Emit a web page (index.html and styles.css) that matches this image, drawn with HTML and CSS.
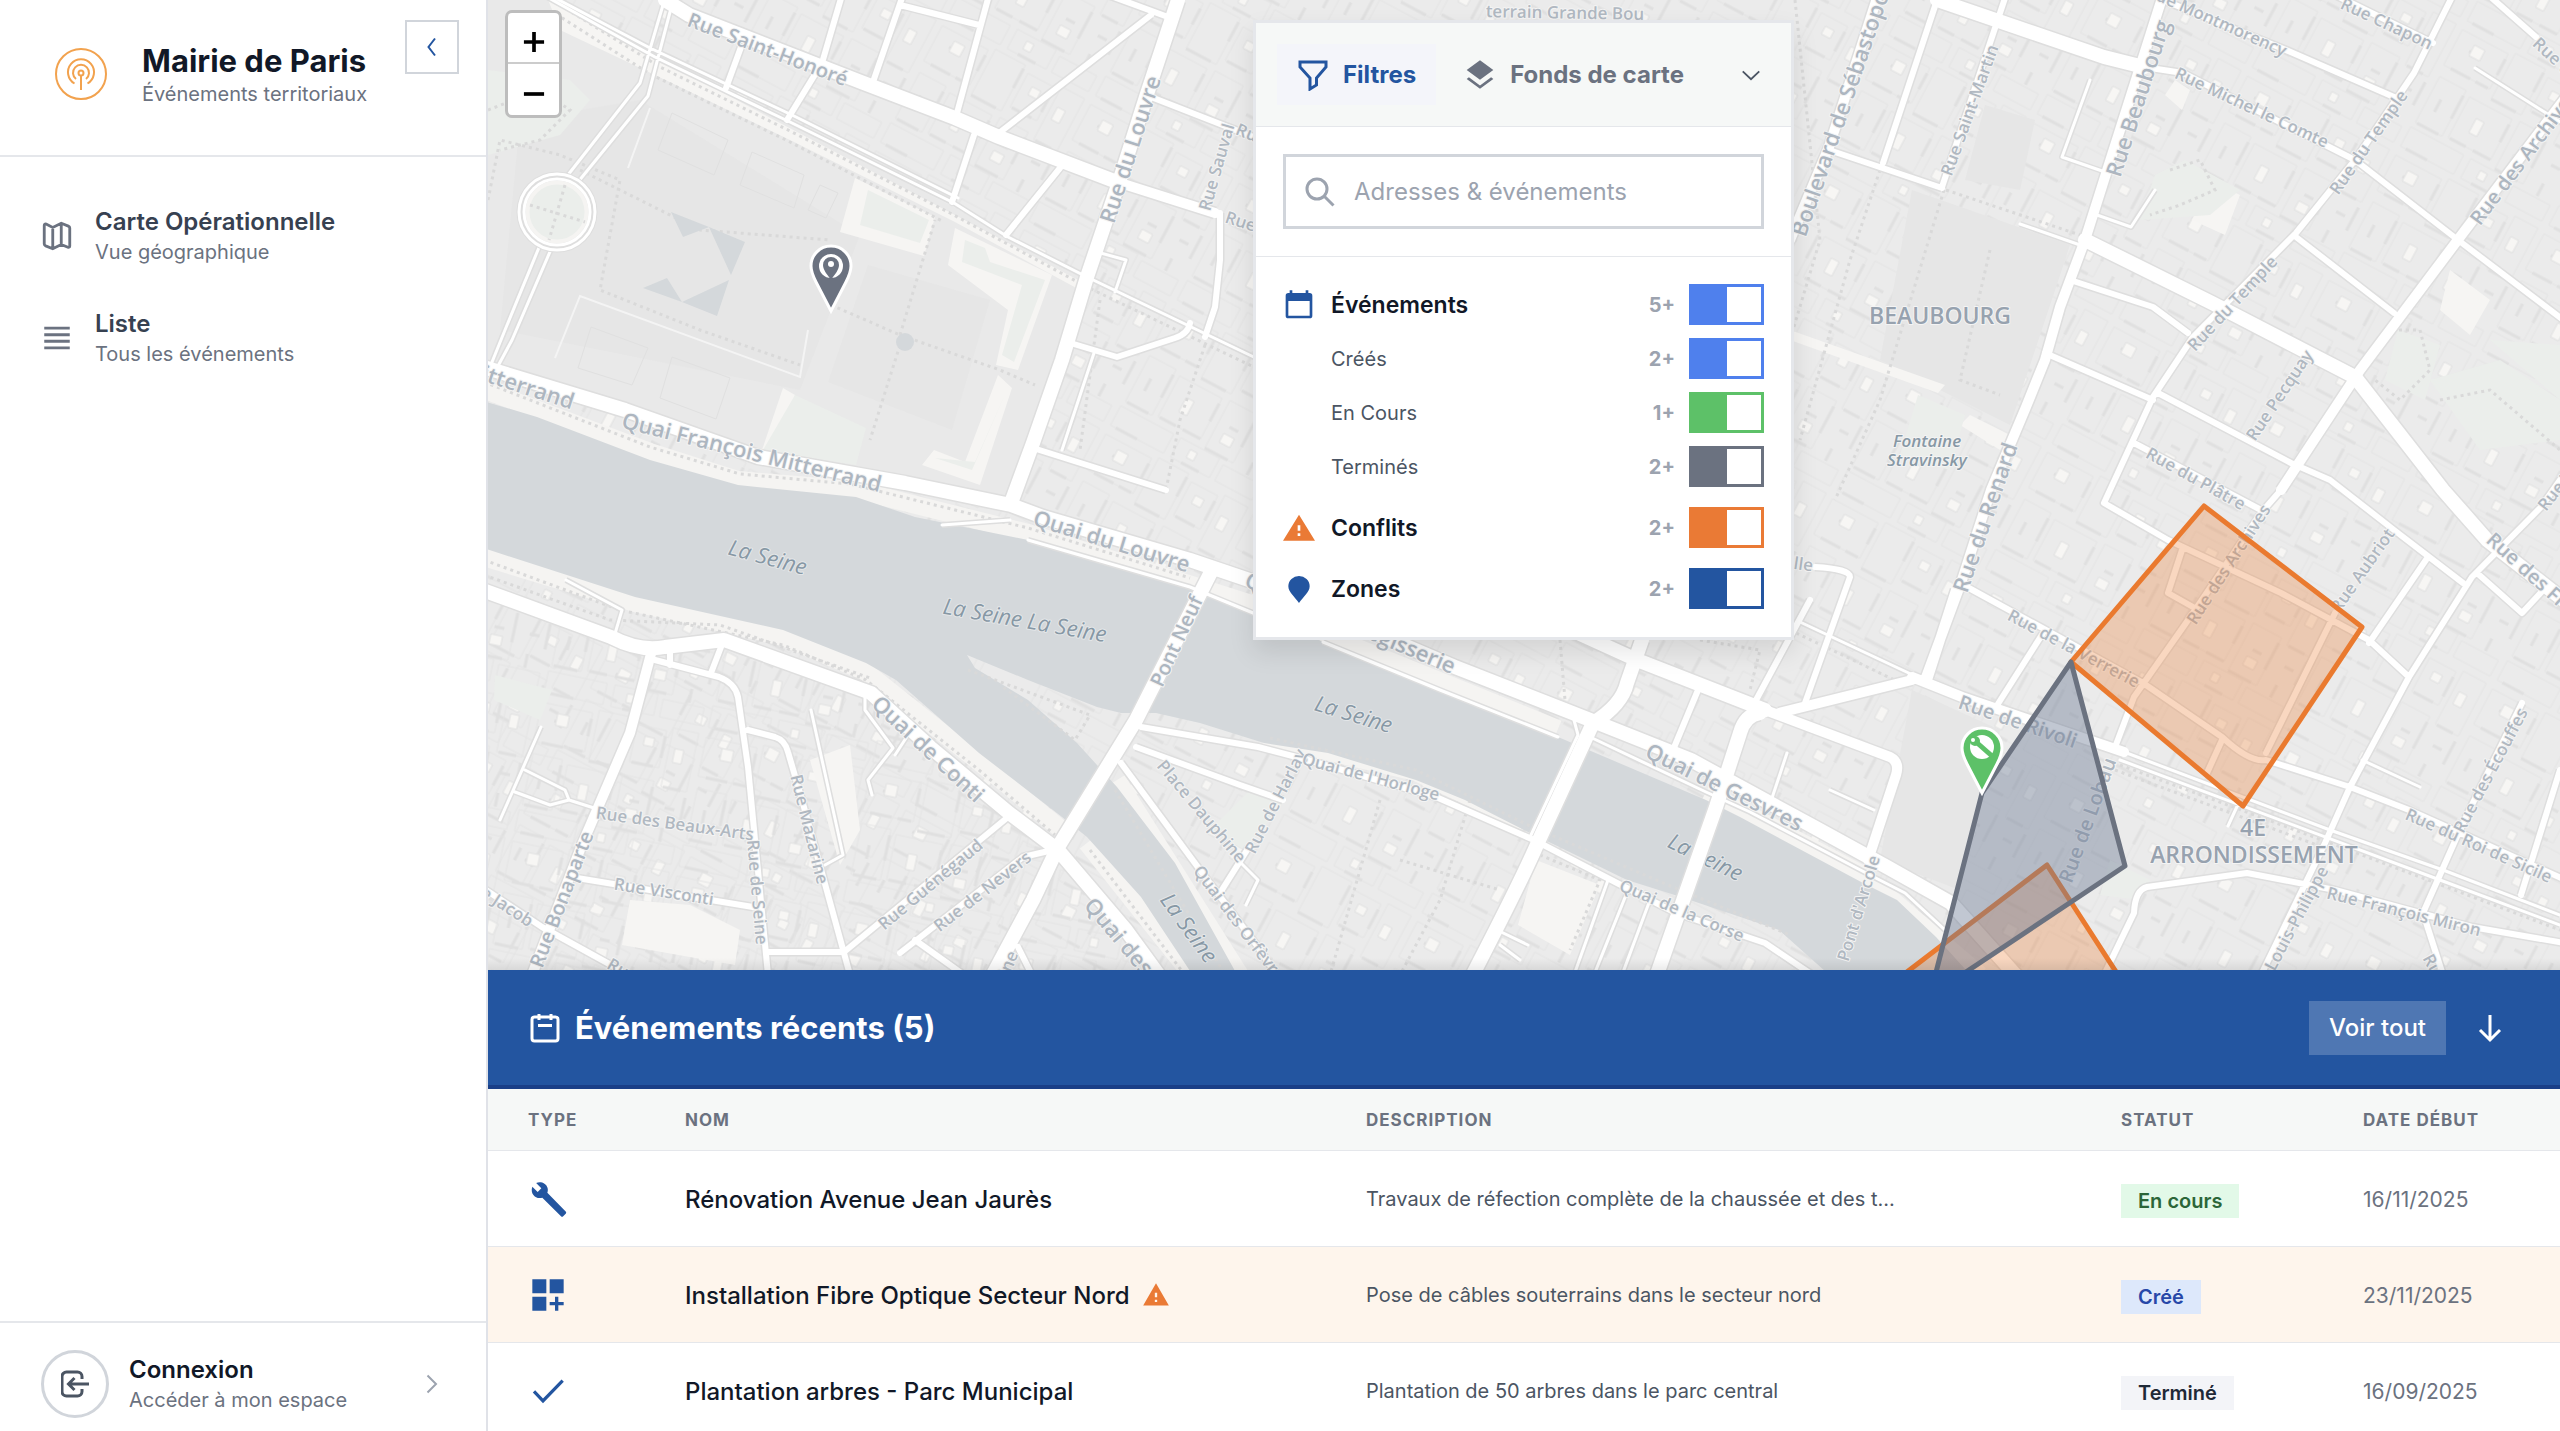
FILE: index.html
```html
<!DOCTYPE html>
<html lang="fr">
<head>
<meta charset="utf-8">
<meta name="viewport" content="width=device-width, initial-scale=1">
<title>Mairie de Paris</title>
<link rel="stylesheet" href="styles.css">
</head>
<body>
<div class="app">
  <aside class="sidebar">
    <header class="brand">
      <svg class="brand-logo" viewBox="0 0 52 52" aria-hidden="true"><circle cx="26" cy="26" r="25"/><circle cx="26" cy="25" r="2.5"/><path d="M26 28v14M21 31a8 8 0 1 1 10 0M19.500 35.500a13 13 0 1 1 13 0"/></svg>
      <div class="brand-text">
        <h1 class="brand-title">Mairie de Paris</h1>
        <p class="sub">Événements territoriaux</p>
      </div>
      <button class="collapse" type="button" aria-label="Réduire le menu"><svg viewBox="0 0 24 24" class="ic-24"><path d="M15 3.500 8.500 12l6.500 8.500"/></svg></button>
    </header>
    <nav class="nav">
      <a class="nav-item" href="#carte">
        <svg class="nav-icon" viewBox="0 0 24 24"><path d="M3 4.500c0-.8.600-1.200 1.300-.9L9 6l6-3 5 2c.7.300 1 .6 1 1.300V19c0 .8-.600 1.200-1.300.9L15 18l-6 3-5-2c-.7-.300-1-.6-1-1.300zM9 6v15M15 3v15"/></svg>
        <span class="nav-text"><strong class="item-title">Carte Opérationnelle</strong><span class="sub">Vue géographique</span></span>
      </a>
      <a class="nav-item" href="#liste">
        <svg class="nav-icon" viewBox="0 0 24 24"><path d="M3 5h18M3 9.700h18M3 14.300h18M3 19h18"/></svg>
        <span class="nav-text"><strong class="item-title">Liste</strong><span class="sub">Tous les événements</span></span>
      </a>
    </nav>
    <a class="login" href="#connexion">
      <span class="login-circle"><svg viewBox="0 0 28 28" class="ic-28"><path d="M21 9V6.500A4.500 4.500 0 0 0 16.500 2H5.500A4.500 4.500 0 0 0 1 6.500v15A4.500 4.500 0 0 0 5.500 26h11a4.500 4.500 0 0 0 4.500-4.500V19M28 14H8M13.500 8 7.500 14l6 6"/></svg></span>
      <span class="login-text"><strong class="item-title dark">Connexion</strong><span class="sub">Accéder à mon espace</span></span>
      <svg viewBox="0 0 24 24" class="ic-24 login-chevron"><path d="M7.500 3.500 16 12l-8.500 8.500"/></svg>
    </a>
  </aside>

  <main class="main">
    <section class="map" id="carte" aria-label="Carte">
      <svg class="map-canvas" viewBox="488 0 2072 970" preserveAspectRatio="xMidYMid slice">
        <defs>
          <pattern id="blocks" width="168" height="142" patternUnits="userSpaceOnUse" patternTransform="rotate(28)">
            <path class="b-lot" d="M4 6h52v40H4zM62 2h34v52H62zM102 8h30v38h-30zM138 4h26v60h-26zM6 58h30v52H6zM42 62h48v46H42zM98 60h32v54H98zM4 116h60v22H4zM72 116h44v22H72zM122 120h42v18h-42z"/>
            <path class="b-shade" d="M12 46h22M40 46h14M62 54h28M104 46h22M8 110h24M44 108h18M70 108h20M98 114h26M56 12v18M96 6v22M132 14v22M36 64v26M90 68v20M130 66v30M20 22h12M110 84h10M18 78v14M140 64h18M164 70v26M146 84h10M10 138h24M84 138h20M148 104v14"/>
            <path class="b-court" d="M22 14h12v12H22zM112 18h10v9h-10zM58 78h9v16h-9zM108 92h12v10h-12zM144 24h9v14h-9zM86 122h8v9h-8z"/>
          </pattern>
          <pattern id="blocks-left" href="#blocks" patternTransform="rotate(12)"/>
          <path id="road-lg" d="M665 0 689 15 861 82 955 118 999 137 1117 182M1178 0 1146 97 1119 182 1087 277 1062 360 1033 443 1011 503M480 366 625 410 758 457 905 483 1011 505 1043 517 1190 560 1258 583 1455 667 1598 723 1691 760 1814 827 1887 867 1951 903 2020 980M480 589 611 637Q640 652 665 647L724 640 871 693 930 747 1009 813 1058 850 1126 930 1166 985M1212 570 1136 720 1058 847 1033 900 990 980M1642 640 1627 683Q1622 705 1593 723L1539 840Q1522 880 1470 980M1760 713Q1745 715 1740 733L1716 807 1655 980M1937 0 2104 57 2144 67M2085 240 2212 303 2355 377 2443 490 2487 540 2570 605M1560 625 1637 660 1765 710"/>
          <path id="road-md" d="M2163-5 2104 180 2085 240 2060 307 2045 360 2026 407 1991 490 1962 580 1925 680M1878-5 1829 147 1790 240M2566 97 2463 233 2360 370 2281 490M1779 713 1912 680M1912 677 1962 697 2124 752M1765 710 1890 757Q1900 762 1896 775L1868 860M652 650 630 733 581 847 530 980M1117 182 1215 213M1956 590 1927 680"/>
          <path id="road-sm" d="M842-5 822 63 787 120M903-5 873 82M989-5 957 113M900 5 979 25M974 135 952 202M741 47 726 88M1100-8 1168 17M1151 15 999 133M1060 168 1006 235M1151 97 1256 138M1220 213V260L1215 307 1205 337M1067 342 1117 357 1175 338Q1188 334 1190 323M1033 448 1166 490M655 660 719 677Q735 683 738 697L748 767 768 975M748 730 775 737Q785 740 788 752L802 800 850 975M1008 817 844 952 768 952M1053 850 1023 857 900 953M915 940 964 975M1018 947 1032 975M571 877 753 907M480 886 542 927 620 970M721 647 711 673M670 652V665M1141 727 1258 747 1308 760 1436 797 1534 840 1617 883 1676 913 1765 943 1820 980M1136 747 1240 785 1283 800M1121 763 1200 870 1258 947 1280 980M1249 847 1220 893M1937 0 1883 163M2006-5 1942 187M1829 150 1942 188M2144 67 2183 73 2355 160 2458 240 2570 325M2453-5 2414 73 2355 160 2296 233 2193 337 2153 397 2104 503 2168 540 2281 593 2369 640 2409 677M2163 0 2286 50 2394 97M2335-5 2433 43M2485-8 2536 37M2296 237 2394 313M2070 280 2153 307 2188 333M2045 353 2153 400M2158 393 2291 463 2330 480 2394 530 2463 583M2134 443 2261 510M2281 490 2261 513 2193 613 2134 697 2114 750M1967 587 2143 683 2222 737Q2250 763 2266 760L2350 787 2409 810 2570 882M2560 480 2541 507 2472 577 2409 677 2350 787 2325 843 2261 975M2428 557 2369 643M2335 613 2266 753M2183 547 2168 593 2193 607M2222 740 2207 773M2477 573 2522 613 2546 587M2522 703 2463 823 2423 913 2443 975M2560 770 2521 895M2104 975 2134 913Q2135 890 2147 887L2247 873 2335 890 2472 927 2570 944M2045 630 1996 707M1815 567Q1850 569 1850 577L1805 703M1810 600 1755 702M1698 690 1673 750"/>
          <path id="road-xs" d="M547-3 655 57 792 123 954 203 1008 237 1087 277 1260 360M540-10 650 48 794 116 958 198M663 5 640 83 564 180M670 12 648 96 578 182M540 245 505 330 488 372M552 247 512 340 498 366M1097 252 1126 260 1115 292M1094 353 1062 450M566 580 622 610 614 637M1028 540 1190 587 1258 615M942 525 1010 520M1323 642 1440 690 1558 737M1574 720 1578 735 1531 835M811 710 843 855 825 865M865 695V710L893 748 868 780 872 795M908 735 895 755M541 727 500 820M525 770 565 790 569 800 594 808M515 792 550 805 569 800M1497 930 1528 945M1500 945 1520 960M1608 880 1574 975M1628 890 1594 975M1650 900 1622 975M1787 753 1772 798M1830 790 1874 810M2090 80 2062 157 2105 172M2097 215 2131 227 2155 190M2020 224 2080 245M1800 622 1915 676M2124 752 2330 830 2443 870 2560 915M2120 760 2440 880 2560 925M2475 68 2565 125M2240 800 2228 826M2362 760 2420 787M1590 737 1706 792 1750 812 1868 874 1905 893 1945 930M1240 862 1258 880 1246 905"/>
          <path id="river" d="M480 400 537 417 650 460 738 485 856 497 915 517 1028 540 1077 553 1190 587 1258 612 1323 642 1558 737 1706 800 1740 817 1863 883 1897 900 1936 937 1975 980H1835L1779 930 1681 897 1627 880 1551 843 1524 830 1465 800 1416 780 1328 753 1264 743 1200 723 1156 713 1121 713 1097 707 1028 680 967 655 975 668 1028 700 1077 743 1117 787 1175 863 1240 980H1196L1141 897 1087 837 1062 817 979 753 896 680 866 663 783 630 635 597 480 547Z"/>
        </defs>
        <path class="land" d="M480-5h2090v990H480z"/>
        <path fill="url(#blocks)" d="M480-5h2090v990H480z"/>
        <path fill="url(#blocks-left)" d="M480 590 620 640 724 640 871 693 1058 850 1166 980H480z"/>
        <path class="plain" d="M480-5H547L1087 277 1011 500 758 452 480 362z"/>
        <path class="plain-2" d="M520 120 640 100 860 235 800 390 500 330zM868 265 990 300 952 430 828 382zM1912 190 2070 245 2010 425 1880 360zM1985 105 2035 120 2020 190 1965 180zM1912 690 2000 730 1960 890 1880 860z"/>
        <path class="outline" d="M672 113 728 140 714 175 658 150zM752 152 804 175 794 208 740 185zM820 185 838 193 826 218 808 210zM591 327 648 348 632 385 578 368zM672 357 730 378 716 419 660 398z"/>
        <path class="edge" d="M555 358 580 296 800 377 808 330M650 108 628 168"/>
        <path class="sand" d="M547-3 560 30 655 75 790 140 955 222 1080 290 1082 282 655 57zM855 178 935 217 924 256 840 232zM955 228 1052 275 1018 370 996 365 1008 310 948 265zM998 375 1012 388 980 485 922 465 934 450 965 462zM783 388 795 395 778 440 762 450zM2210 180 2240 195 2225 235 2192 220zM2450 270 2490 300 2470 335 2440 310zM1536 860 1600 885 1570 955 1518 925zM2175 80 2190 90 2182 110 2165 95zM1970 415 2010 435 2000 450 1960 425zM1790 330 1945 385 1938 393 1790 340zM630 900 690 905 740 930 735 965 622 945zM810 760 850 745 860 830 840 865z"/>
        <path class="park" d="M868 190 929 220 920 243 860 225zM965 240 985 248 990 262 1045 280 1014 362 1002 355 1022 285 962 262zM1006 392 972 470 935 458 975 462zM795 395 866 428 856 465 763 450zM488 70 570 80 590 100 560 135 488 155zM495 675 552 690 540 720 494 700zM2155 175 2185 160 2240 190 2210 215 2140 220zM2398 330 2440 345 2425 400 2385 380zM2430 380 2500 360 2560 400V440L2480 450zM1918 395 1965 415 1950 470 1900 455zM1250 790 1283 803 1245 850 1210 830zM2490 340 2560 345V400zM2110 860 2150 880 2140 900 2100 895z"/>
        <path class="bank" d="M480 388 650 452 738 480 856 490 1028 533 1258 606M480 556 635 603 783 637 866 672 979 762 1062 830M1087 843 1196 980M1117 780 1243 980M1264 737 1416 772 1524 822M1323 634 1558 729M1706 792 1863 875 1980 975"/>
        <use href="#river" class="water"/>
        <path class="dots" d="M560 5 660 67 792 132 950 213 1087 287 1260 370M556 14 650 74 790 142 944 222M484 382 650 447 740 474 850 484 1028 528 1190 578M484 560 620 610 783 645 866 680 979 770 1055 835M484 575 610 620 720 625 870 678M1090 850 1185 975M1115 790 1225 975M1270 738 1416 770 1530 826 1680 890 1790 935M968 670 1090 715 1075 740 1000 685M2120 765 2330 843 2560 930M2115 770 2325 848M1795 0 1820 240 1790 340M1790 630 1905 685M1944 190 1880 400 1835 500M1880 170 1850 260 1800 440M1946 190 2080 235M1990 250 1960 380 2000 395M2170 170 2200 160 2215 190 2180 205 2150 215M2440 400 2490 390 2560 450M2385 330 2420 330 2430 370 2400 400 2375 380M831 305 900 335 1000 370 1035 385M900 335 935 220M900 345 870 440M580 170 700 230 830 240M488 110 540 90 570 110 540 140 500 150M488 200 500 140 560 155 620 180 600 290 700 330 800 365M530 212H585M557 185V240M1540 855 1600 880 1570 950M1470 800 1440 900 1400 975M1380 800 1330 975M1400 860 1500 890M1100 300 1080 450M1205 345 1180 420 1166 490M1560 640 1565 700M1700 640 1760 650 1750 690"/>
        <path class="glass" d="M671 212 683 237 709 227zM709 227 745 242 731 275zM643 288 667 278 682 302zM682 302 729 280 717 316z"/>
        <circle class="glass" cx="905" cy="342" r="9"/>
        <g class="labels water-label">
          <text transform="translate(1706 856) rotate(26)">La Seine</text>
        </g>
        <g class="casing"><use href="#road-xs" class="xs"/><use href="#road-sm" class="sm"/><use href="#road-md" class="md"/><use href="#road-lg" class="lg"/></g>
        <g class="fill"><use href="#road-xs" class="xs"/><use href="#road-sm" class="sm"/><use href="#road-md" class="md"/><use href="#road-lg" class="lg"/></g>
        <circle class="ring-case" cx="557" cy="212" r="36"/><circle class="ring" cx="557" cy="212" r="38"/><circle class="ring" cx="557" cy="212" r="33"/><circle class="ring-in" cx="557" cy="212" r="29"/>
        <path class="dots" d="M530 205 585 222M565 185 549 240"/>

        <g class="labels water-label">
          <text transform="translate(768 556) rotate(15)">La Seine</text>
          <text transform="translate(1025 619) rotate(10)">La Seine La Seine</text>
          <text transform="translate(1354 713) rotate(17)">La Seine</text>
          <text transform="translate(1190 927) rotate(54)">La Seine</text>
        </g>
        <g class="labels major">
          <text transform="translate(1129 149) rotate(-72)">Rue du Louvre</text>
          <text transform="translate(574 401) rotate(18)" class="end">Quai François Mitterrand</text>
          <text transform="translate(752 451) rotate(14)">Quai François Mitterrand</text>
          <text transform="translate(1112 540) rotate(17)">Quai du Louvre</text>
          <text transform="translate(929 748) rotate(43)">Quai de Conti</text>
          <text transform="translate(1090 900) rotate(50)" class="start">Quai des Grands Augustins</text>
          <text transform="translate(1455 666) rotate(23)" class="end">Quai de la Mégisserie</text>
          <text transform="translate(1725 786) rotate(26)">Quai de Gesvres</text>
          <text transform="translate(1797 235) rotate(-71)" class="start">Boulevard de Sébastopol</text>
          <text transform="translate(2137 98) rotate(-72)">Rue Beaubourg</text>
          <text transform="translate(1984 517) rotate(-71)">Rue du Renard</text>
        </g>
        <g class="labels medium">
          <text transform="translate(768 49) rotate(21)">Rue Saint-Honoré</text>
          <text transform="translate(2018 721) rotate(19)">Rue de Rivoli</text>
          <text transform="translate(2087 820) rotate(-70)">Rue de Lobau</text>
          <text transform="translate(561 899) rotate(-69)">Rue Bonaparte</text>
          <text transform="translate(1176 641) rotate(-65)">Pont Neuf</text>
          <text transform="translate(2474 222) rotate(-53)" class="start">Rue des Archives</text>
          <text transform="translate(2490 536) rotate(42)" class="start">Rue des Francs Bourgeois</text>
        </g>
        <g class="labels minor">
          <text transform="translate(1216 167) rotate(-74)">Rue Sauval</text>
          <text transform="translate(1237 128) rotate(22)" class="start">Rue Berger</text>
          <text transform="translate(1226 216) rotate(18)" class="start">Rue des Halles</text>
          <text transform="translate(1565 12) rotate(1)">terrain Grande Bou</text>
          <text transform="translate(1202 811) rotate(50)">Place Dauphine</text>
          <text transform="translate(1242 926) rotate(53)">Quai des Orfèvres</text>
          <text transform="translate(1275 801) rotate(-63)">Rue de Harlay</text>
          <text transform="translate(1371 776) rotate(15)">Quai de l'Horloge</text>
          <text transform="translate(1682 910) rotate(23)">Quai de la Corse</text>
          <text transform="translate(1858 908) rotate(-73)">Pont d'Arcole</text>
          <text transform="translate(675 823) rotate(8)">Rue des Beaux-Arts</text>
          <text transform="translate(664 891) rotate(9)">Rue Visconti</text>
          <text transform="translate(758 892) rotate(85)">Rue de Seine</text>
          <text transform="translate(810 829) rotate(76)">Rue Mazarine</text>
          <text transform="translate(930 884) rotate(-40)">Rue Guénégaud</text>
          <text transform="translate(982 891) rotate(-38)">Rue de Nevers</text>
          <text transform="translate(532 922) rotate(33)" class="end">Rue Jacob</text>
          <text transform="translate(609 962) rotate(30)" class="start">Rue Jacob</text>
          <text transform="translate(1003 975) rotate(-68)" class="start">ine</text>
          <text transform="translate(1969 110) rotate(-70)">Rue Saint-Martin</text>
          <text transform="translate(2286 51) rotate(24)" class="end">Rue de Montmorency</text>
          <text transform="translate(2387 23) rotate(25)">Rue Chapon</text>
          <text transform="translate(2252 107) rotate(25)">Rue Michel le Comte</text>
          <text transform="translate(2368 142) rotate(-55)">Rue du Temple</text>
          <text transform="translate(2232 303) rotate(-47)">Rue du Temple</text>
          <text transform="translate(2279 395) rotate(-56)">Rue Pecquay</text>
          <text transform="translate(2196 478) rotate(29)">Rue du Plâtre</text>
          <text transform="translate(2536 40) rotate(43)" class="start">Rue de Bretagne</text>
          <text transform="translate(2074 648) rotate(28)">Rue de la Verrerie</text>
          <text transform="translate(2228 564) rotate(-57)">Rue des Archives</text>
          <text transform="translate(2362 570) rotate(-55)">Rue Aubriot</text>
          <text transform="translate(2490 770) rotate(-62)">Rue des Écouffes</text>
          <text transform="translate(2479 845) rotate(24)">Rue du Roi de Sicile</text>
          <text transform="translate(2404 911) rotate(14)">Rue François Miron</text>
          <text transform="translate(2323 867) rotate(-62)" class="end">Rue du Pont Louis-Philippe</text>
          <text transform="translate(2541 508) rotate(-52)" class="start">Rue Vieille</text>
          <text transform="translate(2428 955) rotate(62)" class="start">Rue</text>
          <text transform="translate(1813 565) rotate(8)" class="end">Rue de la Coutellerille</text>
          <g class="poi"><text x="1927" y="440">Fontaine</text><text x="1927" y="459">Stravinsky</text></g>
        </g>
        <g class="labels district">
          <text x="1940" y="315">BEAUBOURG</text>
          <text x="2253" y="827">4E</text>
          <text x="2254" y="854">ARRONDISSEMENT</text>
        </g>

        <path class="zone conflict" d="M2204 506 2362 627 2243 806 2071 662z"/>
        <path class="zone conflict" d="M2047 865 2120 978H1899z"/>
        <path class="zone done" d="M2071 662 2125 866 1948 984H1933L1982 793z"/>
        <g class="pin pin-done" transform="translate(831 311)">
          <path d="M0 0-15-29C-18-35-20-39-20-45a20 20 0 0 1 40 0C20-39 18-35 15-29z"/>
          <circle class="pin-dot" cy="-45" r="12"/>
          <path class="pin-glyph" d="M0-31c-4-6-8-10-8-15a8 8 0 0 1 16 0c0 5-4 9-8 15z"/>
          <circle class="pin-dot" cy="-47" r="3"/>
        </g>
        <g class="pin pin-active" transform="translate(1982 793)">
          <path d="M0 0-15-29C-18-35-20-39-20-45a20 20 0 0 1 40 0C20-39 18-35 15-29z"/>
          <circle class="pin-dot" cy="-46" r="12"/><path class="pin-tool" d="M-7-52 10-37"/><circle class="pin-glyph" cx="-7" cy="-52" r="5"/><circle class="pin-dot" cx="-9" cy="-53" r="2"/>
        </g>
      </svg>

      <div class="zoom">
        <button type="button" class="zoom-btn" aria-label="Zoom avant"><svg viewBox="0 0 24 24"><path d="M12 1v22M1 12h22"/></svg></button>
        <button type="button" class="zoom-btn" aria-label="Zoom arrière"><svg viewBox="0 0 24 24"><path d="M1 12h22"/></svg></button>
      </div>

      <div class="filters">
        <div class="tabs">
          <button type="button" class="tab active"><svg viewBox="0 0 32 32" class="ic-32"><path d="M3 3h26v5L19.500 19v7L13 30V19L3 8z"/></svg>Filtres</button>
          <button type="button" class="tab"><svg viewBox="0 0 24 24" class="ic-32 solid"><path d="M12 1 2 8.300l10 7.300 10-7.300zM3.700 13.700 2 15l10 7.300L22 15l-1.700-1.300L12 19.900z"/></svg>Fonds de carte</button>
          <button type="button" class="tab-toggle" aria-label="Replier"><svg viewBox="0 0 24 24" class="ic-24"><path d="m3 8 9 8.500L21 8"/></svg></button>
        </div>
        <div class="search-wrap">
          <label class="search"><svg viewBox="0 0 32 32" class="ic-32"><circle cx="13" cy="13" r="10"/><path d="m20.500 20.500 9 9"/></svg><input type="search" placeholder="Adresses &amp; événements" aria-label="Adresses et événements"></label>
        </div>
        <div class="layers">
          <label class="layer"><svg viewBox="0 0 24 24" class="ic-32 blue"><path d="M20 3h-1V1h-2v2H7V1H5v2H4a2 2 0 0 0-2 2v15a2 2 0 0 0 2 2h16a2 2 0 0 0 2-2V5a2 2 0 0 0-2-2zm0 17H4V9h16z"/></svg><span class="layer-name">Événements</span><span class="count">5+</span><input type="checkbox" class="toggle t-created" checked></label>
          <label class="layer child"><span class="layer-name">Créés</span><span class="count">2+</span><input type="checkbox" class="toggle t-created" checked></label>
          <label class="layer child"><span class="layer-name">En Cours</span><span class="count">1+</span><input type="checkbox" class="toggle t-active" checked></label>
          <label class="layer child"><span class="layer-name">Terminés</span><span class="count">2+</span><input type="checkbox" class="toggle t-done" checked></label>
          <label class="layer group"><svg viewBox="0 0 24 24" class="ic-32 orange"><path fill-rule="evenodd" d="M0 21.500h24L12 2zm13-3.500h-2v-2h2zm0-4h-2v-4h2z"/></svg><span class="layer-name">Conflits</span><span class="count">2+</span><input type="checkbox" class="toggle t-conflict" checked></label>
          <label class="layer group"><svg viewBox="0 0 24 24" class="ic-32 blue"><path d="M12 22.500C9 18 4 14.500 4 10a8 7.800 0 0 1 16 0C20 14.500 15 18 12 22.500z"/></svg><span class="layer-name">Zones</span><span class="count">2+</span><input type="checkbox" class="toggle t-zone" checked></label>
        </div>
      </div>
    </section>

    <section class="events" id="liste">
      <header class="events-head">
        <svg viewBox="0 0 32 32" class="ic-32"><rect x="3" y="5" width="26" height="24" rx="2.500"/><path d="M10 2v6M22 2v6M9 13.500h14"/></svg>
        <h2 class="events-title">Événements récents (5)</h2>
        <button type="button" class="see-all">Voir tout</button>
        <button type="button" class="hide" aria-label="Masquer"><svg viewBox="0 0 32 32" class="ic-32"><path d="M16 3v25M6 18l10 10 10-10"/></svg></button>
      </header>
      <table class="table">
        <thead><tr><th class="c-type">Type</th><th class="c-name">Nom</th><th>Description</th><th class="c-status">Statut</th><th class="c-date">Date début</th></tr></thead>
        <tbody>
          <tr><td><svg viewBox="0 0 24 24" class="ic-40 blue"><path d="M2.600 4.600 5.800 7.800 8 5.600 4.900 2.400C7.600 1.300 10.800 2.500 11.700 5.200c.3 1 .3 2-.1 3L22.600 19.500c.4.4.4.9 0 1.300l-1.500 1.500c-.4.4-.9.4-1.300 0L8.600 11.200c-3.600 1.300-7.600-2.200-6-6.600z"/></svg></td><td class="name">Rénovation Avenue Jean Jaurès</td><td class="desc">Travaux de réfection complète de la chaussée et des t...</td><td><span class="badge b-active">En cours</span></td><td class="date">16/11/2025</td></tr>
          <tr class="warn"><td><svg viewBox="0 0 24 24" class="ic-40 blue"><path d="M2.600 2.600h8.400v8.400H2.600zM13 2.600h8.400v8.400H13zM2.600 13h8.400v8.400H2.600zM18.200 13h-2v3.200H13v2h3.200v3.200h2v-3.200h3.200v-2h-3.200z"/></svg></td><td class="name">Installation Fibre Optique Secteur Nord<svg viewBox="0 0 24 24" class="ic-28 orange name-alert"><path fill-rule="evenodd" d="M1 21h22L12 2zm12-3h-2v-2h2zm0-4h-2v-4h2z"/></svg></td><td class="desc">Pose de câbles souterrains dans le secteur nord</td><td><span class="badge b-created">Créé</span></td><td class="date">23/11/2025</td></tr>
          <tr><td><svg viewBox="0 0 24 24" class="ic-40 blue"><path d="M9 16.500 4.300 11.500l-1.400 1.400L9 19.300 21.500 6.500l-1.400-1.400z"/></svg></td><td class="name">Plantation arbres - Parc Municipal</td><td class="desc">Plantation de 50 arbres dans le parc central</td><td><span class="badge b-done">Terminé</span></td><td class="date">16/09/2025</td></tr>
        </tbody>
      </table>
    </section>
  </main>
</div>
</body>
</html>
```
FILE: styles.css
```css
* { box-sizing: border-box; }
body { margin: 0; font-family: Inter, "Liberation Sans", sans-serif; color: #111827; background: #fff; }
h1, h2, p { margin: 0; }
a { color: inherit; text-decoration: none; }
button { font: inherit; color: inherit; border: 0; background: none; padding: 0; cursor: pointer; }
svg { display: block; flex: none; fill: none; stroke: currentColor; stroke-width: 2; }
.ic-24 { width: 24px; height: 24px; }
.ic-28 { width: 28px; height: 28px; }
.ic-32 { width: 32px; height: 32px; }
.ic-40 { width: 40px; height: 40px; }
.solid, .blue, .orange { fill: currentColor; stroke: none; }
.blue { color: #2355a0; }
.orange { color: #ea7a35; }

.app { display: grid; grid-template-columns: 488px minmax(0, 1fr); height: 100vh; overflow: hidden; }

/* Sidebar */
.sidebar { display: flex; flex-direction: column; border-right: 2px solid #e0e2e8; }
.brand { display: flex; align-items: flex-start; height: 157px; padding: 20px 27px 0 55px; border-bottom: 2px solid #e5e7eb; }
.brand-logo { width: 52px; height: 52px; margin-top: 28px; color: #f2a24e; }
.brand-text { flex: 1; margin-left: 35px; padding-top: 22px; }
.brand-title { font-size: 31px; line-height: 38px; font-weight: 700; white-space: nowrap; }
.sub { display: block; font-size: 20px; line-height: 28px; color: #6b7280; font-weight: 400; white-space: nowrap; }
.collapse { display: grid; place-items: center; flex: none; width: 54px; height: 54px; margin-left: -32px; border: 2px solid #d1d5db; color: #2355a0; }
.nav { flex: 1; padding: 28px 40px; }
.nav-item { display: flex; align-items: center; gap: 21px; height: 102px; }
.nav-icon { width: 34px; height: 34px; color: #6b7280; }
.item-title { display: block; font-size: 24px; line-height: 32px; font-weight: 600; color: #374151; white-space: nowrap; }
.dark { color: #111827; }
.login { display: flex; align-items: center; height: 110px; padding: 13px 42px 0 41px; border-top: 2px solid #e5e7eb; }
.login-circle { display: grid; place-items: center; width: 68px; height: 68px; border: 3px solid #d1d5db; border-radius: 50%; color: #4b5563; }
.login-circle svg { stroke-width: 3; }
.login-text { flex: 1; margin-left: 20px; }
.login-chevron { color: #9ca3af; }

.main { display: grid; grid-template-rows: minmax(0, 1fr) 461px; min-width: 0; }

/* Map */
.map { position: relative; overflow: hidden; background: #ebebeb; }
.map::after { content: ""; position: absolute; inset: auto 0 0; height: 12px; background: linear-gradient(transparent, rgba(0, 0, 0, .08)); }
.map-canvas { width: 100%; height: 100%; stroke: none; }
.land { fill: #ebebeb; }
.plain { fill: #e9e9e9; }
.plain-2 { fill: #e6e6e6; }
.b-lot { stroke: #e4e4e4; stroke-width: 1; }
.b-shade { stroke: #e0e0e0; stroke-width: 3; }
.b-court { fill: #f7f6f4; stroke: #e0e0e0; stroke-width: 1; }
.outline { stroke: #e0e0e0; stroke-width: 1; }
.edge { stroke: #f4f4f4; stroke-width: 2; }
.sand { fill: #f6f5f3; }
.park { fill: #ebeeeb; }
.bank { stroke: #f5f4f2; stroke-width: 18; }
.water, .glass { fill: #d4d8db; }
.dots { stroke: #d9d9d9; stroke-width: 3; stroke-dasharray: 3 4; }
.ring-case { fill: #f5f4f2; stroke: #dedede; stroke-width: 9; }
.ring { stroke: #fff; stroke-width: 3; }
.ring-in { fill: #ebeeeb; stroke: #f5f4f2; stroke-width: 3; }
.casing { stroke: #dedede; stroke-linejoin: round; }
.fill { stroke: #fff; stroke-linejoin: round; stroke-linecap: round; }
.fill .xs { stroke-width: 3; }
.fill .sm { stroke-width: 6; }
.fill .md { stroke-width: 10; }
.fill .lg { stroke-width: 14; }
.casing .xs { stroke-width: 6; }
.casing .sm { stroke-width: 9; }
.casing .md { stroke-width: 13; }
.casing .lg { stroke-width: 17; }
.labels { font-family: "Open Sans", "Noto Sans", sans-serif; text-anchor: middle; dominant-baseline: central; paint-order: stroke; stroke: #f4f4f4; stroke-width: 2; stroke-linejoin: round; }
.major { font-size: 22px; font-weight: 600; fill: #adb6c0; }
.medium { font-size: 20px; font-weight: 600; fill: #adb6c0; }
.minor { font-size: 17px; font-weight: 600; fill: #b0b8c1; }
.district { font-size: 23px; font-weight: 600; fill: #97a2af; }
.poi, .water-label { font-style: italic; fill: #8798a5; }
.poi { font-size: 17px; }
.water-label { font-size: 22px; font-weight: 500; stroke: #e4e7e9; }
.start { text-anchor: start; }
.end { text-anchor: end; }
.zone { stroke-width: 5; stroke-linejoin: round; }
.conflict { fill: rgba(234, 122, 47, .3); stroke: #ea7a2f; }
.done { fill: rgba(107, 122, 148, .42); stroke: #6b7280; }
.pin { stroke: #fff; stroke-width: 3; }
.pin-done, .pin-done .pin-glyph { fill: #6b7280; }
.pin-active, .pin-active .pin-glyph { fill: #5dc168; }
.pin .pin-dot { fill: #fff; stroke: none; }
.pin .pin-glyph { stroke: none; }
.pin-tool { stroke: #5dc168; stroke-width: 5; }

.zoom { position: absolute; top: 10px; left: 17px; border: 3px solid #bdbdbd; border-radius: 7px; background: #fff; }
.zoom-btn { display: grid; place-items: center; width: 51px; height: 51px; padding-top: 8px; color: #000; }
.zoom-btn svg { stroke-width: 4; width: 22px; height: 22px; }
.zoom-btn:first-child { border-bottom: 2px solid #ccc; }

.filters { position: absolute; top: 20px; right: 766px; width: 541px; border: 3px solid #e5e7eb; background: #fff; box-shadow: 0 12px 24px rgba(0, 0, 0, .1); }
.tabs { display: flex; align-items: center; height: 104px; padding: 0 16px 0 21px; background: #f6f8f7; border-bottom: 1px solid #e5e7eb; }
.tab { display: flex; align-items: center; gap: 14px; height: 61px; padding: 0 20px; font-size: 24px; font-weight: 700; color: #6b7280; white-space: nowrap; }
.active { color: #2355a0; background: #f4f5fa; margin-right: 8px; }
.active svg { stroke-width: 3; }
.tab-toggle { display: grid; place-items: center; width: 48px; height: 48px; margin-left: auto; color: #4b5563; }
.tab-toggle svg { width: 22px; height: 22px; }
.search-wrap { padding: 27px; border-bottom: 1px solid #e5e7eb; }
.search { display: flex; align-items: center; gap: 18px; height: 75px; padding: 0 18px; border: 3px solid #d1d5db; color: #9ca3af; }
.search input { flex: 1; min-width: 0; padding: 0; border: 0; outline: 0; background: none; font: 24px Inter, sans-serif; color: #111827; }
.search input::placeholder { color: #9ca3af; opacity: 1; }
.search svg { stroke-width: 3; }
.layers { padding: 27px 27px 28px; display: flex; flex-direction: column; gap: 13px; }
.layer { display: flex; align-items: center; height: 41px; font-size: 23px; font-weight: 600; }
.group { margin-top: 7px; }
.layer-name { flex: 1; margin-left: 16px; }
.child { font-size: 20px; font-weight: 400; color: #4b5563; padding-left: 32px; }
.count { margin-right: 14px; font-size: 20px; font-weight: 700; color: #9ca3af; }
.toggle { appearance: none; width: 75px; height: 41px; margin: 0; border: 3px solid; background: linear-gradient(90deg, currentColor 35px, #fff 35px); }
.t-created { color: #4f80ed; }
.t-active { color: #5dc168; }
.t-done { color: #6b7280; }
.t-conflict { color: #ea7a35; }
.t-zone { color: #2355a0; }

/* Recent events */
.events { overflow: hidden; background: #fff; }
.events-head { display: flex; align-items: center; height: 119px; padding: 0 54px 0 41px; background: #2355a0; border-bottom: 4px solid #1a3f87; color: #fff; }
.events-title { margin-left: 14px; font-size: 31px; font-weight: 700; }
.see-all { margin-left: auto; height: 54px; padding: 0 20px; background: #4f77b3; font-size: 24px; font-weight: 500; }
.hide { margin-left: 28px; }
.hide svg, .events-head > svg { stroke-width: 3; }
.table { width: 100%; table-layout: fixed; border-spacing: 0; }
.table th { height: 62px; padding: 0 0 0 40px; text-align: left; font-size: 17px; font-weight: 700; letter-spacing: 1px; text-transform: uppercase; color: #6b7280; background: #f6f8f7; border-bottom: 1px solid #e5e7eb; }
.table td { height: 96px; padding: 1px 0 0 40px; border-bottom: 1px solid #e5e7eb; white-space: nowrap; }
.c-type { width: 157px; }
.c-name { width: 681px; }
.c-status { width: 242px; }
.c-date { width: 237px; }
.warn { background: #fef5ec; }
.name { font-size: 24px; font-weight: 500; }
.name-alert { display: inline-block; margin-left: 12px; vertical-align: -5px; }
.desc { font-size: 20px; color: #4b5563; }
.date { font-size: 21px; color: #6b7280; }
.badge { display: inline-block; height: 34px; margin-top: 4px; padding: 0 17px; font-size: 20px; line-height: 34px; font-weight: 600; vertical-align: middle; }
.b-active { color: #2b6638; background: #e2f9e8; }
.b-created { color: #2747a8; background: #dde8fb; }
.b-done { color: #1f2937; background: #f3f4f8; }
```
